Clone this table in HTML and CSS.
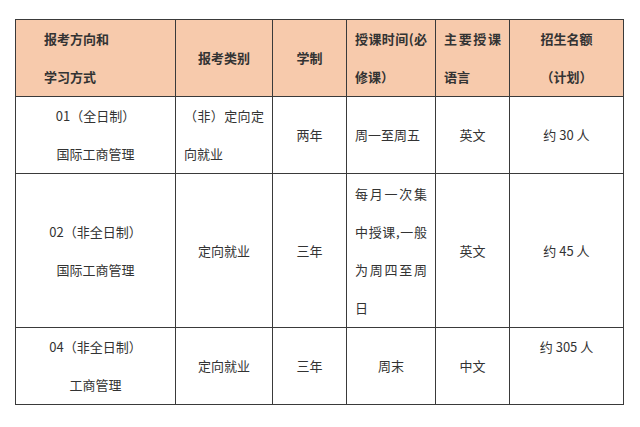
FILE: index.html
```html
<!DOCTYPE html>
<html lang="zh-CN">
<head>
<meta charset="utf-8">
<title>招生计划</title>
<link rel="stylesheet" href="styles.css">
</head>
<body>
<table class="plan">
  <colgroup>
    <col class="c1"><col class="c2"><col class="c3"><col class="c4"><col class="c5"><col class="c6">
  </colgroup>
  <thead>
    <tr class="row-head">
      <th class="left-wide">报考方向和<br>学习方式</th>
      <th class="center">报考类别</th>
      <th class="center">学制</th>
      <th class="just">授课时间(必修课）</th>
      <th class="just">主要授课语言</th>
      <th class="center">招生名额<br>（计划）</th>
    </tr>
  </thead>
  <tbody>
    <tr class="row-1">
      <td class="center">01（全日制）<br>国际工商管理</td>
      <td class="just">（非）定向定向就业</td>
      <td class="center">两年</td>
      <td class="just">周一至周五</td>
      <td class="center">英文</td>
      <td class="center">约 30 人</td>
    </tr>
    <tr class="row-2">
      <td class="center">02（非全日制）<br>国际工商管理</td>
      <td class="center">定向就业</td>
      <td class="center">三年</td>
      <td class="just">每月一次集中授课,一般为周四至周日</td>
      <td class="center">英文</td>
      <td class="center">约 45 人</td>
    </tr>
    <tr class="row-3">
      <td class="center">04（非全日制）<br>工商管理</td>
      <td class="center">定向就业</td>
      <td class="center">三年</td>
      <td class="center">周末</td>
      <td class="center">中文</td>
      <td class="center top">约 305 人</td>
    </tr>
  </tbody>
</table>
</body>
</html>
```

FILE: styles.css
```css
html, body {
  margin: 0;
  padding: 0;
  background: #ffffff;
}
body {
  padding: 19px 0 0 15px;
  font-family: "Noto Sans CJK SC", "Noto Sans", sans-serif;
  font-size: 13px;
  color: #333333;
}
.plan {
  border-collapse: collapse;
  table-layout: fixed;
  width: 608px;
}
.c1 { width: 160px; }
.c2 { width: 97px; }
.c3 { width: 74px; }
.c4 { width: 89px; }
.c5 { width: 74px; }
.c6 { width: 114px; }
.plan th, .plan td {
  border: 1px solid #3a3a3a;
  padding: 0 8px;
  line-height: 38px;
  vertical-align: middle;
  font-weight: normal;
}
.plan th {
  background: #f7caac;
  font-weight: bold;
}
.row-head { height: 77px; }
.row-1 { height: 77px; }
.row-2 { height: 154px; }
.row-3 { height: 77px; }
.plan .left-wide {
  text-align: left;
  padding-left: 28px;
}
.plan .center { text-align: center; }
.plan .just { text-align: justify; }
.plan .top { vertical-align: top; }
```
